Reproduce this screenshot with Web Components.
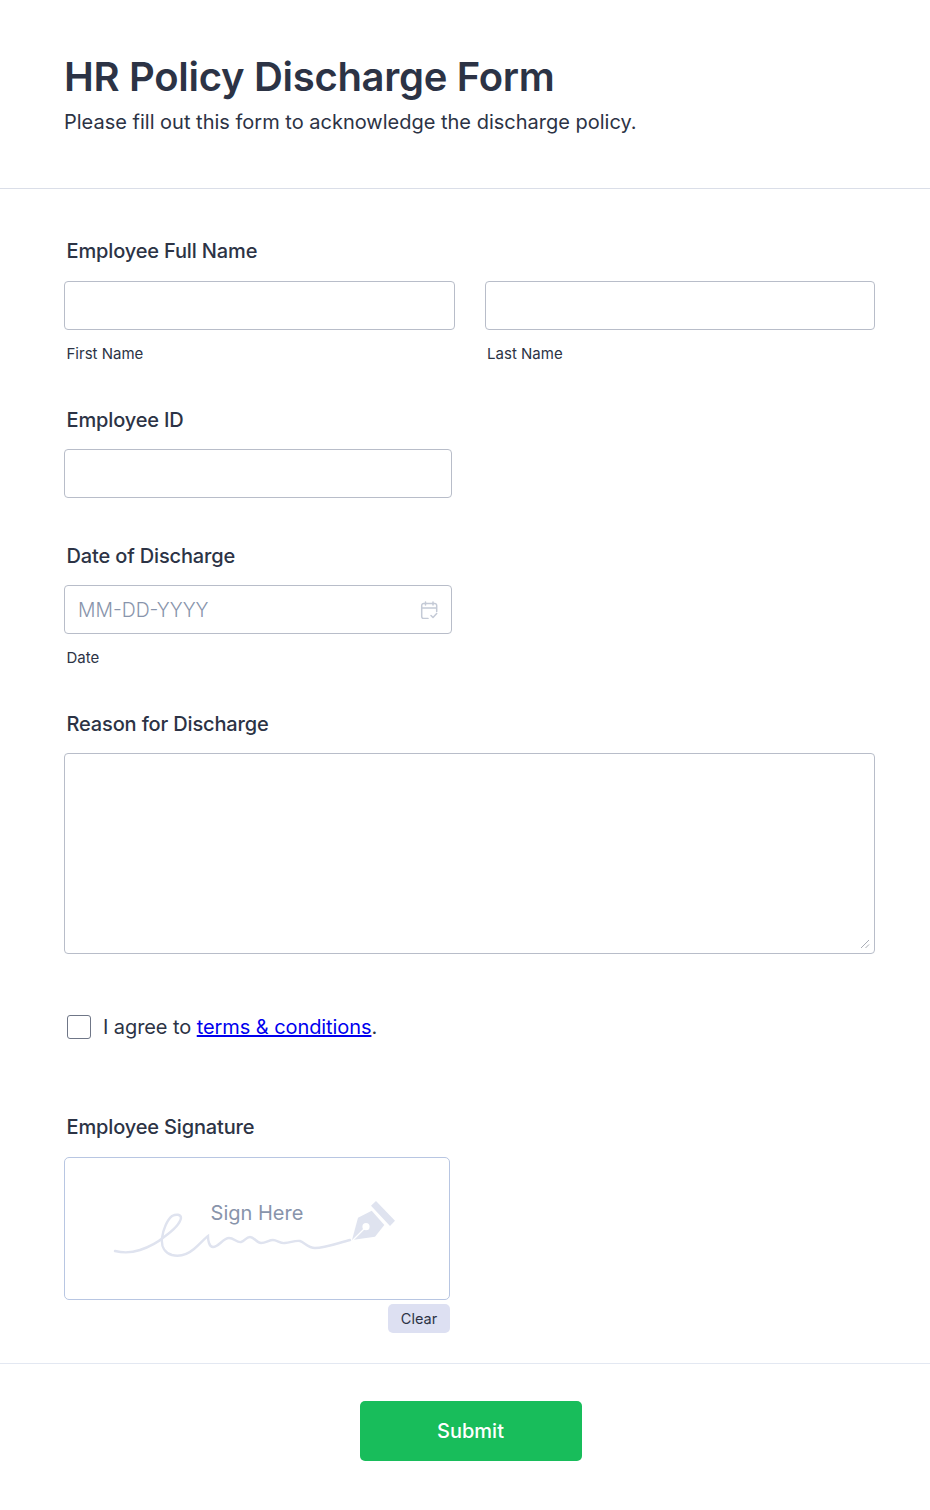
<!DOCTYPE html>
<html><head><meta charset="utf-8"><style>
html,body{margin:0;padding:0;background:#fff;font-family:Inter,"Liberation Sans",sans-serif;color:#2c3345}
</style></head><body>
<template id="t-header"><style>
:host{display:block;height:188px;box-sizing:content-box;padding:0 64px;border-bottom:1px solid #dadee8}
h1{margin:0;padding-top:53px;font-size:40px;line-height:48px;font-weight:600;color:#2c3345;letter-spacing:-.3px}
p{margin:0;padding-top:9px;font-size:20px;line-height:24px;font-weight:400;color:#2c3345}
</style><h1><slot name="title"></slot></h1><p><slot name="sub"></slot></p></template>

<template id="t-field"><style>
:host{display:block}
.l{display:block;padding-left:2.500px;font-size:20px;line-height:24px;font-weight:500;color:#2c3345;height:24px;margin-bottom:var(--gap,18px);letter-spacing:-.15px}
</style><span class="l"><slot name="label"></slot></span><slot></slot></template>

<template id="t-input"><style>
:host{display:block}
.b{box-sizing:border-box;height:49px;border:1px solid #b8bdc9;border-radius:4px;background:#fff;display:flex;align-items:center;justify-content:space-between;padding:0 13px;font-size:19.400px;color:#8894ab;font-weight:300}
.s{display:block;padding-left:2.500px;margin-top:15px;font-size:15px;line-height:18px;color:#2c3345}
.s:empty{display:none}
::slotted(svg){display:block}
</style><div class="b"><span id="ph"></span><slot></slot></div><span class="s" id="sub"></span></template>

<template id="t-check"><style>
:host{display:flex;align-items:center;padding-left:3px;height:26px;font-size:20px;color:#2c3345;gap:12px;letter-spacing:-.08px}
.c{box-sizing:border-box;width:24px;height:24px;border:1px solid #6f7687;border-radius:3px;background:#fff;flex:none}
::slotted(a){color:#0000ee;text-decoration:underline}
</style><span class="c"></span><span><slot></slot></span></template>

<template id="t-sign"><style>
:host{display:block;width:386px}
.p{position:relative;box-sizing:border-box;height:143px;border:1px solid #b8c6e2;border-radius:5px;background:#fff}
svg{position:absolute;left:-1px;top:-1px;display:block}
.t{position:absolute;left:0;right:0;top:43px;text-align:center;font-size:20px;line-height:24px;color:#8894ab}
.r{display:flex;justify-content:flex-end;margin-top:4px}
.c{box-sizing:border-box;width:62px;height:29px;padding-bottom:1px;border-radius:5px;background:#dde0f2;color:#2c3345;font-size:14.500px;display:flex;align-items:center;justify-content:center}
</style><div class="p">
<svg width="386" height="143" viewBox="64 1157 386 143" fill="none">
<path d="M115 1251C123 1253 131 1253 140 1250C149 1247 157 1243 164 1237C171 1232 180 1224 181 1218C181 1214 176 1214 172 1216C167 1220 163 1230 162 1238C161 1247 165 1253 172 1255C180 1257 188 1254 194 1249C200 1244 205 1238 208 1236C208 1240 209 1247 213 1247C219 1247 223 1238 229 1238C234 1238 237 1243 241 1242C245 1241 246 1237 250 1237C254 1237 257 1243 261 1243C266 1243 269 1240 273 1240C277 1240 281 1244 285 1243C290 1243 295 1240 300 1241C304 1242 308 1248 315 1248C325 1248 338 1243 350 1240" stroke="#dfe3ef" stroke-width="2.400" stroke-linecap="round"/>
<path d="M352 1240L358 1217.700L371.700 1210.700L384.300 1225L375 1236.700Z" fill="#dfe3ef"/>
<circle cx="366" cy="1226.700" r="3.600" fill="#fff"/>
<path d="M352.500 1240.500L364 1229" stroke="#fff" stroke-width="1.300"/>
<path d="M371 1205.700L376 1201L395 1220.700L390 1226Z" fill="#dfe3ef"/>
</svg>
<div class="t"><slot></slot></div></div>
<div class="r"><span class="c"><slot name="clear"></slot></span></div></template>

<template id="t-area"><style>
:host{display:block}
.b{position:relative;box-sizing:border-box;height:201px;border:1px solid #b8bdc9;border-radius:4px;background:#fff}
svg{position:absolute;right:4px;bottom:4px;display:block}
</style><div class="b"><svg width="10" height="10" viewBox="0 0 10 10"><path d="M1 9L9 1M5.500 9L9 5.500" stroke="#a9adb6" stroke-width="1"/></svg></div></template>

<template id="t-submit"><style>
:host{display:block;border-top:1px solid #e3e8f2;margin-top:30px;padding-top:37px;height:110px}
.w{display:flex;justify-content:center;padding-left:11px}
.b{box-sizing:border-box;width:222px;height:59.500px;border-radius:5px;background:#18bd5b;color:#fff;font-size:20px;font-weight:500;display:flex;align-items:center;justify-content:center}
</style><div class="w"><span class="b"><slot></slot></span></div></template>

<template id="t-form"><style>
:host{display:block;padding:50px 55px 0 64px}
</style><slot></slot></template>

<hr-header><span slot="title">HR Policy Discharge Form</span><span slot="sub">Please fill out this form to acknowledge the discharge policy.</span></hr-header>
<hr-form>
<hr-field style="margin-bottom:45px"><span slot="label">Employee Full Name</span><hr-pair></hr-pair></hr-field>
<hr-field style="margin-bottom:46px;--gap:17px"><span slot="label">Employee ID</span><hr-input style="width:388px"></hr-input></hr-field>
<hr-field style="margin-bottom:45px;--gap:17px"><span slot="label">Date of Discharge</span><hr-input style="width:388px" placeholder="MM-DD-YYYY" sub="Date"><svg width="18" height="18" viewBox="0 0 18 18" fill="none" stroke="#c4cad6" stroke-width="1.500" stroke-linecap="round" stroke-linejoin="round"><path d="M8 17.500H3.700A2 2 0 0 1 1.700 15.500V4.500A2 2 0 0 1 3.700 2.500H14.700A2 2 0 0 1 16.700 4.500V10.500M1.700 7H16.700M5.500 1V4M13 1V4M11 14.500L13 16.500L16.700 12.500"/></svg></hr-input></hr-field>
<hr-field style="margin-bottom:60px;--gap:17px"><span slot="label">Reason for Discharge</span><hr-area></hr-area></hr-field>
<hr-check style="margin-bottom:75px">I agree to <a href="#">terms &amp; conditions</a>.</hr-check>
<hr-field><span slot="label">Employee Signature</span><hr-sign>Sign Here<span slot="clear">Clear</span></hr-sign></hr-field>
</hr-form>
<hr-submit>Submit</hr-submit>
<script>
function def(name,tid){customElements.define(name,class extends HTMLElement{constructor(){super();const r=this.attachShadow({mode:'open'});r.appendChild(document.getElementById(tid).content.cloneNode(true))}connectedCallback(){const r=this.shadowRoot,p=r.getElementById('ph'),s=r.getElementById('sub');if(p)p.textContent=this.getAttribute('placeholder')||'';if(s)s.textContent=this.getAttribute('sub')||''}})}
def('hr-header','t-header');def('hr-field','t-field');def('hr-input','t-input');def('hr-check','t-check');def('hr-sign','t-sign');def('hr-area','t-area');def('hr-submit','t-submit');def('hr-form','t-form');
customElements.define('hr-pair',class extends HTMLElement{constructor(){super();const r=this.attachShadow({mode:'open'});r.innerHTML='<style>:host{display:grid;grid-template-columns:390.600px 390.400px;column-gap:30px}</style><hr-input sub="First Name"></hr-input><hr-input sub="Last Name"></hr-input>'}});
</script>
</body></html>
